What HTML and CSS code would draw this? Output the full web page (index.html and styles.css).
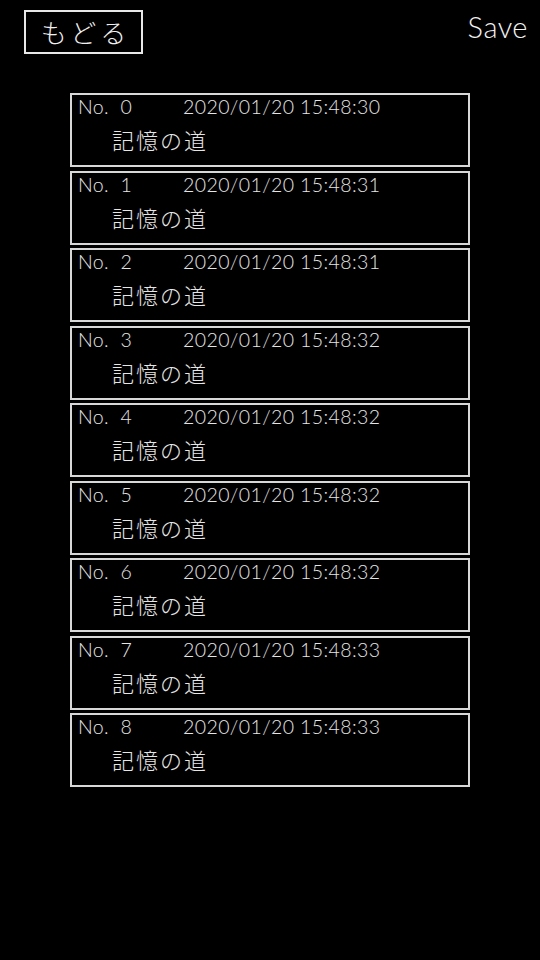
FILE: index.html
```html
<!DOCTYPE html>
<html lang="ja">
<head>
  <meta charset="UTF-8" />
  <meta name="viewport" content="width=device-width, initial-scale=1.0"/>
  <title>Load</title>
  <link rel="stylesheet" href="styles.css">
</head>
<body>
  <header class="top">
    <button class="back">もどる</button>
    <span class="title">Save</span>
  </header>

  <main class="slots">
    <div class="slot">
      <div class="slot-head"><span class="num">No.&nbsp; 0</span><span class="date">2020/01/20 15:48:30</span></div>
      <div class="place">記憶の道</div>
    </div>
    <div class="slot">
      <div class="slot-head"><span class="num">No.&nbsp; 1</span><span class="date">2020/01/20 15:48:31</span></div>
      <div class="place">記憶の道</div>
    </div>
    <div class="slot">
      <div class="slot-head"><span class="num">No.&nbsp; 2</span><span class="date">2020/01/20 15:48:31</span></div>
      <div class="place">記憶の道</div>
    </div>
    <div class="slot">
      <div class="slot-head"><span class="num">No.&nbsp; 3</span><span class="date">2020/01/20 15:48:32</span></div>
      <div class="place">記憶の道</div>
    </div>
    <div class="slot">
      <div class="slot-head"><span class="num">No.&nbsp; 4</span><span class="date">2020/01/20 15:48:32</span></div>
      <div class="place">記憶の道</div>
    </div>
    <div class="slot">
      <div class="slot-head"><span class="num">No.&nbsp; 5</span><span class="date">2020/01/20 15:48:32</span></div>
      <div class="place">記憶の道</div>
    </div>
    <div class="slot">
      <div class="slot-head"><span class="num">No.&nbsp; 6</span><span class="date">2020/01/20 15:48:32</span></div>
      <div class="place">記憶の道</div>
    </div>
    <div class="slot">
      <div class="slot-head"><span class="num">No.&nbsp; 7</span><span class="date">2020/01/20 15:48:33</span></div>
      <div class="place">記憶の道</div>
    </div>
    <div class="slot">
      <div class="slot-head"><span class="num">No.&nbsp; 8</span><span class="date">2020/01/20 15:48:33</span></div>
      <div class="place">記憶の道</div>
    </div>
  </main>
</body>
</html>
```

FILE: styles.css
```css
body {
  margin: 0;
  background: #000;
  color: #e6e6e6;
  font-family: Lato, "Noto Sans CJK JP", sans-serif;
  font-weight: 300;
  width: 540px;
  height: 960px;
}

.top {
  display: flex;
  justify-content: space-between;
  align-items: flex-start;
  padding: 10px 12px 0 24px;
}

.back {
  width: 119px;
  height: 44px;
  background: #000;
  color: #f0f0f0;
  border: 2px solid #e8e8e8;
  font-family: "Noto Sans CJK JP", sans-serif;
  font-weight: 300;
  font-size: 26px;
  letter-spacing: 4px;
  padding: 0 0 0 4px;
  line-height: 38px;
}

.title {
  font-size: 29px;
  color: #f2f2f2;
  line-height: 34px;
  padding-top: 0;
  letter-spacing: 0.5px;
}

.slots {
  display: flex;
  flex-direction: column;
  gap: 3.5px;
  margin: 39px 0 0 70px;
  width: 400px;
}

.slot {
  height: 70px;
  border: 2px solid #d8d8d8;
  padding: 0 6px;
}

.slot-head {
  display: flex;
  font-size: 19.5px;
  line-height: 24px;
  height: 29px;
}

.num {
  width: 105px;
  letter-spacing: 0.4px;
}

.date {
  letter-spacing: 0.4px;
}

.place {
  font-family: "Noto Sans CJK JP", sans-serif;
  font-weight: 300;
  font-size: 22px;
  line-height: 30px;
  padding-left: 34px;
  letter-spacing: 2px;
}
```
